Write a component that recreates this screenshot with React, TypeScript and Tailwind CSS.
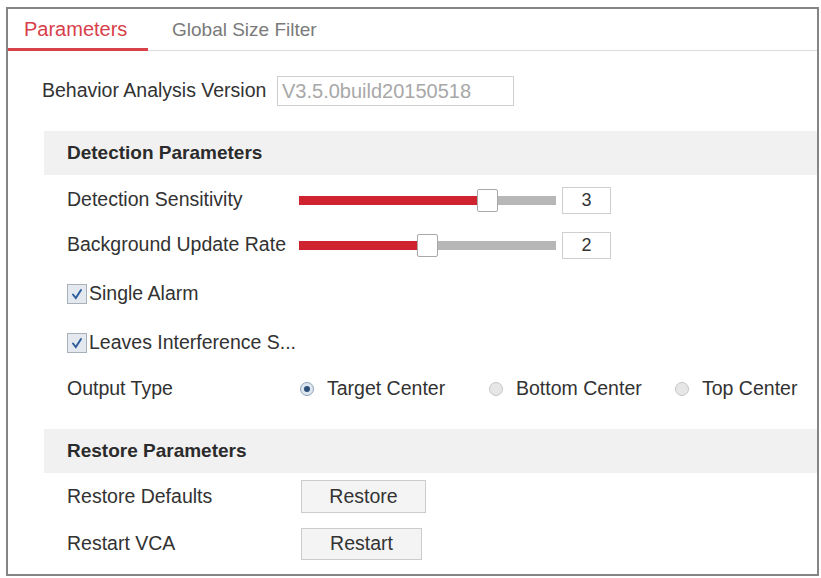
import React from "react";

const font = { fontFamily: '"Liberation Sans", Arial, sans-serif' };

function Slider({ value, fill }: { value: string; fill: number }) {
  return (
    <div className="flex items-center">
      <div className="relative w-[257px] h-[9px] bg-[#b7b7b7]">
        <div className="absolute left-0 top-0 h-full bg-[#cf2330]" style={{ width: fill }} />
        {/* thumb */}
        <div
          className="absolute top-[-7px] w-[21px] h-[23px] bg-white border border-[#a9a9a9] rounded-[2px]"
          style={{ left: fill }}
        />
      </div>
      <div className="ml-[6px] w-[49px] h-[27px] border border-[#cfcfcf] bg-white flex items-center justify-center text-[18px] text-[#333]">
        {value}
      </div>
    </div>
  );
}

function Check({ label }: { label: string }) {
  return (
    <div className="flex items-center">
      <div className="w-[20px] h-[20px] border border-[#a8b0ba] bg-[#e4e9f0] flex items-center justify-center">
        <svg width="14" height="14" viewBox="0 0 14 14">
          <path d="M3 7.5 L5.8 11 L11 3" fill="none" stroke="#2f5f9e" strokeWidth="2" strokeLinecap="round" />
        </svg>
      </div>
      <span className="ml-[2px]">{label}</span>
    </div>
  );
}

function Radio({ label, checked }: { label: string; checked?: boolean }) {
  return (
    <div className="flex items-center">
      <div
        className={`w-[14px] h-[14px] rounded-full border flex items-center justify-center ${
          checked ? "border-[#8da2b8] bg-[#dde6ef]" : "border-[#c6c6c6] bg-[#e6e6e6]"
        }`}
      >
        {checked && <div className="w-[6px] h-[6px] rounded-full bg-[#2c4f78]" />}
      </div>
      <span className="ml-[13px]">{label}</span>
    </div>
  );
}

function SectionHeader({ title }: { title: string }) {
  return (
    <div className="ml-[36px] h-[44px] bg-[#f1f1f1] flex items-center pl-[23px] font-bold text-[19px] text-[#2b2b2b]">
      {title}
    </div>
  );
}

export default function App() {
  return (
    <div className="w-[821px] h-[578px] bg-white pt-[7px] pl-[6px]" style={font}>
      <div className="w-[813px] h-[569px] border-2 border-[#858585] text-[#323232] text-[19.5px]">
        {/* TABS */}
        <div className="flex h-[42px] border-b border-[#dcdcdc]">
          <div className="w-[140px] h-[42px] border-b-[3px] border-[#d8404a] pl-[16px] pt-[1px] flex items-center text-[#d8404a] text-[20px]">
            Parameters
          </div>
          <div className="pl-[24px] pt-[1px] flex items-center text-[#7a7a7a] text-[19px]">
            Global Size Filter
          </div>
        </div>

        {/* VERSION */}
        <div className="mt-[25px] pl-[34px] flex items-center h-[30px]">
          <span className="w-[235px]">Behavior Analysis Version</span>
          <div className="w-[237px] h-[30px] border border-[#cfcfcf] flex items-center pl-[4px] text-[#a8a8a8] text-[20px]">
            V3.5.0build20150518
          </div>
        </div>

        <div className="mt-[25px]">
          <SectionHeader title="Detection Parameters" />
        </div>

        <div className="pl-[59px]">
          <div className="h-[50px] flex items-center">
            <span className="w-[232px]">Detection Sensitivity</span>
            <Slider value="3" fill={178} />
          </div>
          <div className="h-[40px] flex items-center">
            <span className="w-[232px]">Background Update Rate</span>
            <Slider value="2" fill={118} />
          </div>
          <div className="h-[58px] flex items-center">
            <Check label="Single Alarm" />
          </div>
          <div className="h-[40px] flex items-center">
            <Check label="Leaves Interference S..." />
          </div>
          <div className="h-[52px] flex items-center">
            <span className="w-[233px]">Output Type</span>
            <div className="w-[189px]">
              <Radio label="Target Center" checked />
            </div>
            <div className="w-[186px]">
              <Radio label="Bottom Center" />
            </div>
            <Radio label="Top Center" />
          </div>
        </div>

        <div className="mt-[14px]">
          <SectionHeader title="Restore Parameters" />
        </div>

        <div className="pl-[59px]">
          <div className="h-[47px] flex items-center">
            <span className="w-[234px]">Restore Defaults</span>
            <button className="w-[125px] h-[33px] bg-[#f4f4f4] border border-[#cccccc] text-[#333]">
              Restore
            </button>
          </div>
          <div className="h-[48px] flex items-center">
            <span className="w-[234px]">Restart VCA</span>
            <button className="w-[121px] h-[32px] bg-[#f4f4f4] border border-[#cccccc] text-[#333]">
              Restart
            </button>
          </div>
        </div>
      </div>
    </div>
  );
}
